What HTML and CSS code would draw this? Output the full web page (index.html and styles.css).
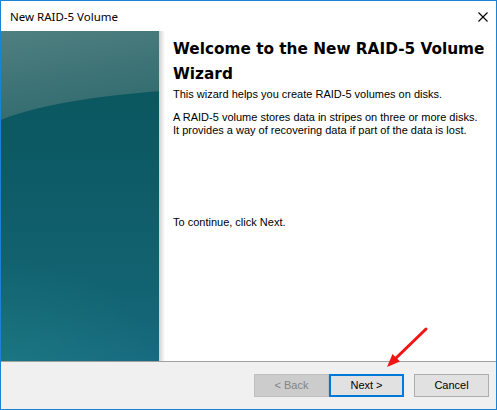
FILE: index.html
```html
<!DOCTYPE html>
<html>
<head>
<meta charset="utf-8">
<link rel="stylesheet" href="styles.css">
</head>
<body>
<div class="window">
  <div class="titlebar">
    <span class="title">New RAID-5 Volume</span>
    <svg class="close" width="10" height="10" viewBox="0 0 10 10"><path d="M0.5 0.5 L9.5 9.5 M9.5 0.5 L0.5 9.5" stroke="#000" stroke-width="1.1" fill="none"/></svg>
  </div>
  <div class="main">
    <div class="sidebar"></div>
    <div class="shade"></div>
    <div class="content">
      <h1 class="heading">Welcome to the New RAID-5 Volume Wizard</h1>
      <p class="text">This wizard helps you create RAID-5 volumes on disks.</p>
      <p class="text gap">A RAID-5 volume stores data in stripes on three or more disks.<br>It provides a way of recovering data if part of the data is lost.</p>
      <p class="text last">To continue, click Next.</p>
    </div>
  </div>
  <div class="footer">
    <button class="btn disabled">&lt; Back</button>
    <button class="btn focus">Next &gt;</button>
    <button class="btn cancel">Cancel</button>
  </div>
  <svg class="arrow" width="52" height="48" viewBox="0 0 52 48">
    <line x1="46" y1="5" x2="14" y2="36" stroke="#f01414" stroke-width="3" stroke-linecap="round"/>
    <polygon points="7,43 20,37.5 12.5,30" fill="#f01414"/>
  </svg>
</div>
</body>
</html>
```
FILE: styles.css
```css
html, body {
  margin: 0;
  padding: 0;
  background: #ffffff;
}
.window {
  position: relative;
  width: 497px;
  height: 410px;
  box-sizing: border-box;
  border: 1px solid #1883d7;
  display: flex;
  flex-direction: column;
  background: #ffffff;
  font-family: "Liberation Sans", Arial, sans-serif;
}
.titlebar {
  height: 30px;
  flex: none;
  display: flex;
  align-items: center;
  padding-left: 9px;
  padding-right: 8px;
}
.title {
  font-family: "Noto Sans", "Open Sans", sans-serif;
  font-size: 11.5px;
  color: #000;
  padding-top: 1px;
}
.close {
  margin-left: auto;
  margin-top: 1px;
}
.main {
  height: 330px;
  flex: none;
  display: flex;
}
.sidebar {
  position: relative;
  overflow: hidden;
  width: 158px;
  flex: none;
  background: linear-gradient(170deg, #4f8081 0, #437779 40px, #326c70 95px);
}
.sidebar::before {
  content: "";
  position: absolute;
  left: -30px;
  top: 57px;
  width: 560px;
  height: 290px;
  border-radius: 280px 280px 0 0 / 58px 58px 0 0;
  background:
    radial-gradient(160px 120px at 30px 290px, rgba(32,128,132,0.55), rgba(32,128,132,0) 100%),
    linear-gradient(to bottom, #0b5760 0, #0d5b66 90px, #11616f 170px, #146676 230px, #176b80 273px);
}
.shade {
  width: 6px;
  flex: none;
  background: linear-gradient(to right, #cfcfcf, #e8e8e8 50%, #ffffff);
}
.content {
  flex: 1;
  padding: 6px 10px 0 8px;
}
.heading {
  margin: 0 0 1px 0;
  font-family: "DejaVu Sans", Verdana, sans-serif;
  font-weight: bold;
  font-size: 15.3px;
  line-height: 25px;
  color: #000;
}
.text {
  margin: 0;
  font-size: 11px;
  line-height: 13px;
  color: #000;
}
.gap {
  margin-top: 10px;
}
.last {
  margin-top: 79px;
}
.footer {
  flex: 1;
  border-top: 1px solid #a0a0a0;
  background: #f0f0f0;
  display: flex;
  align-items: center;
  justify-content: flex-end;
  padding-right: 7px;
  padding-bottom: 1px;
}
.btn {
  width: 75px;
  height: 23px;
  box-sizing: border-box;
  font-family: "Liberation Sans", Arial, sans-serif;
  font-size: 11px;
  color: #000;
  background: #e1e1e1;
  border: 1px solid #adadad;
  padding: 0;
  margin: 0;
}
.disabled {
  background: #cccccc;
  border-color: #bfbfbf;
  color: #838383;
}
.focus {
  border: 2px solid #0078d7;
}
.cancel {
  margin-left: 10px;
}
.arrow {
  position: absolute;
  left: 379px;
  top: 323px;
}
```
